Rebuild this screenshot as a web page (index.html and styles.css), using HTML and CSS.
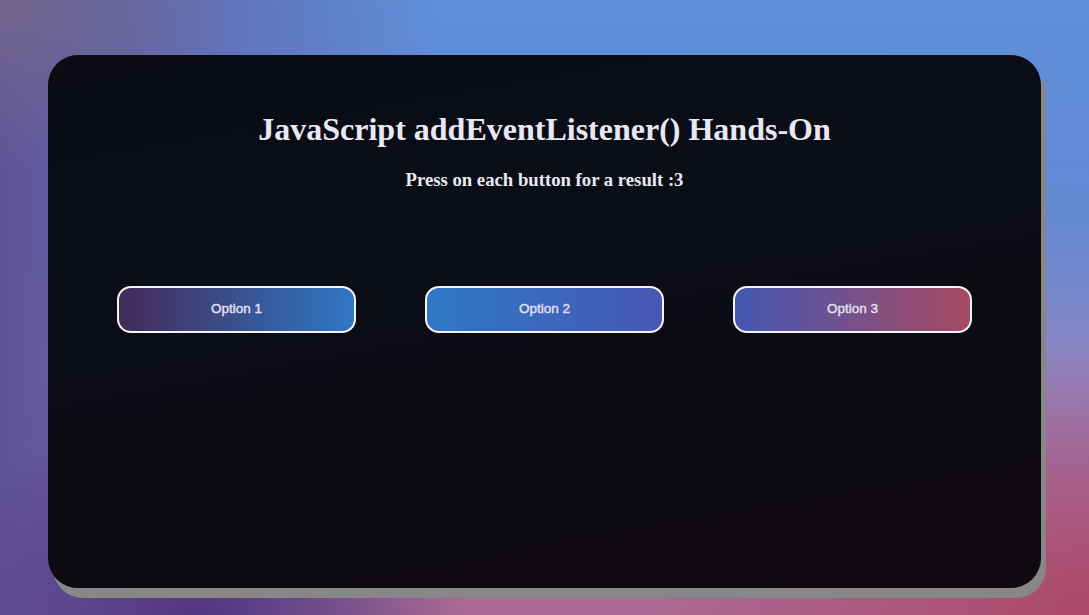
FILE: index.html
```html
<!DOCTYPE html>
<html lang="en">
<head>
<meta charset="utf-8">
<title>JavaScript addEventListener() Hands-On</title>
<link rel="stylesheet" href="styles.css">
</head>
<body>
  <main class="card">
    <h1 class="title">JavaScript addEventListener() Hands-On</h1>
    <h3 class="subtitle">Press on each button for a result :3</h3>
    <div class="options">
      <button class="option option-1">Option 1</button>
      <button class="option option-2">Option 2</button>
      <button class="option option-3">Option 3</button>
    </div>
  </main>
</body>
</html>
```
FILE: styles.css
```css
html, body {
  margin: 0;
  height: 100%;
}
body {
  box-sizing: border-box;
  padding: 55px 48px 27px;
  font-family: "Liberation Serif", "Times New Roman", serif;
  background:
    radial-gradient(ellipse 22% 28% at 0% 0%, rgba(115, 105, 140, 0.9), rgba(115, 105, 140, 0) 100%),
    radial-gradient(ellipse 25% 35% at 18% 100%, rgba(78, 52, 128, 0.95), rgba(78, 52, 128, 0) 100%),
    linear-gradient(to right, rgba(96, 84, 152, 1) 0%, rgba(98, 90, 158, 0.75) 12%, rgba(100, 100, 170, 0) 40%),
    radial-gradient(ellipse 40% 45% at 100% 100%, rgba(172, 72, 104, 1), rgba(172, 72, 104, 0) 100%),
    linear-gradient(to bottom, #5e8fd8 0%, #6388d2 35%, #8e88c4 60%, #a673a6 85%, #ac6a92 100%);
  background-color: #6a7ac8;
}
.card {
  box-sizing: border-box;
  height: 100%;
  border-radius: 30px;
  background: linear-gradient(170deg, #0b0c14 0%, #0b0e17 30%, #0c0b11 70%, #110a10 100%);
  box-shadow: 5px 10px 0 #878787;
  padding-top: 56px;
  text-align: center;
  color: #e9e8f2;
}
.title {
  margin: 0;
  font-size: 32px;
  font-weight: bold;
  line-height: 37px;
}
.subtitle {
  margin: 21px 0 0;
  font-size: 18.72px;
  font-weight: bold;
  line-height: 22px;
}
.options {
  margin-top: 95px;
  display: flex;
  justify-content: space-evenly;
}
.option {
  width: 239px;
  height: 47px;
  padding: 0 0 2px;
  border: 2px solid #f4f2fa;
  border-radius: 14px;
  font-family: "Liberation Sans", Arial, sans-serif;
  font-size: 13.5px;
  font-weight: normal;
  -webkit-text-stroke: 0.4px #e2e0f0;
  color: #e2e0f0;
  cursor: pointer;
}
.option-1 {
  background: linear-gradient(to right, #432a58, #2f78c6);
}
.option-2 {
  background: linear-gradient(to right, #2f78c6, #4858b4);
}
.option-3 {
  background: linear-gradient(to right, #4458b2, #a84a62);
}
```
